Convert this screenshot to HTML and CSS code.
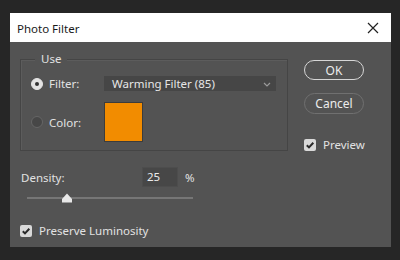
FILE: index.html
```html
<!DOCTYPE html>
<html>
<head>
<meta charset="utf-8">
<link rel="stylesheet" href="styles.css">
</head>
<body>
<div class="dialog">
  <div class="titlebar">
    <span class="title">Photo Filter</span>
    <svg class="close" width="12" height="12" viewBox="0 0 12 12"><path d="M1 1L11 11M11 1L1 11" stroke="#222" stroke-width="1.2" fill="none"/></svg>
  </div>
  <div class="content">
    <div class="left">
      <div class="group">
        <span class="legend">Use</span>
        <div class="row">
          <span class="radio checked"></span>
          <span class="rlabel">Filter:</span>
          <div class="select">
            <span>Warming Filter (85)</span>
            <svg class="chev" width="8" height="5" viewBox="0 0 8 5"><path d="M1 1L4 4L7 1" stroke="#9a9a9a" stroke-width="1.2" fill="none"/></svg>
          </div>
        </div>
        <div class="row row-color">
          <span class="radio"></span>
          <span class="rlabel">Color:</span>
          <div class="swatch"></div>
        </div>
      </div>
      <div class="density">
        <span class="dlabel">Density:</span>
        <div class="num">25</div>
        <span class="pct">%</span>
      </div>
      <div class="slider">
        <div class="track"></div>
        <svg class="thumb" width="12" height="10" viewBox="0 0 12 10"><path d="M6 0.5L11 6V9.5H1V6Z" fill="#e8e8e8"/></svg>
      </div>
      <div class="check-row lum">
        <span class="checkbox"><svg width="12" height="12" viewBox="0 0 12 12"><path d="M2.8 6.2L5 8.4L9.3 3.8" stroke="#2a2a2a" stroke-width="2" fill="none"/></svg></span>
        <span>Preserve Luminosity</span>
      </div>
    </div>
    <div class="right">
      <button class="btn ok">OK</button>
      <button class="btn cancel">Cancel</button>
      <div class="check-row preview">
        <span class="checkbox"><svg width="12" height="12" viewBox="0 0 12 12"><path d="M2.8 6.2L5 8.4L9.3 3.8" stroke="#2a2a2a" stroke-width="2" fill="none"/></svg></span>
        <span>Preview</span>
      </div>
    </div>
  </div>
</div>
</body>
</html>
```
FILE: styles.css
```css
html, body {
  margin: 0;
  padding: 0;
  background: #262626;
  width: 400px;
  height: 260px;
  overflow: hidden;
}
body {
  font-family: "Noto Sans", "Open Sans", sans-serif;
  font-size: 11px;
  color: #e2e2e2;
}
.dialog {
  margin: 13px 0 0 10px;
  width: 381px;
  height: 234px;
  background: #535353;
}
.titlebar {
  height: 29px;
  background: #ffffff;
  display: flex;
  align-items: center;
  justify-content: space-between;
  padding: 0 12px 0 7px;
}
.title {
  color: #1a1a1a;
  font-size: 11.5px;
  margin-top: 1px;
}
.close {
  display: block;
}
.content {
  display: flex;
  padding: 0 10px;
}
.left {
  width: 268px;
}
.group {
  position: relative;
  margin-top: 17px;
  height: 92px;
  border: 1px solid #454545;
  padding: 16px 10px 0 10px;
  box-sizing: border-box;
  box-shadow: inset 1px 1px 0 #5c5c5c;
}
.legend {
  position: absolute;
  top: -10px;
  left: 14px;
  padding: 0 6px;
  background: #535353;
  line-height: 18px;
  font-size: 11.5px;
}
.row {
  display: flex;
  align-items: center;
  height: 15px;
}
.row-color {
  height: 40px;
  margin-top: 11px;
}
.radio {
  width: 12px;
  height: 12px;
  border-radius: 50%;
  box-sizing: border-box;
  background: #474747;
  border: 1px solid #666;
  flex: none;
  position: relative;
}
.radio.checked {
  background: #e4e4e4;
  border-color: #e4e4e4;
}
.radio.checked::after {
  content: "";
  position: absolute;
  left: 3px;
  top: 3px;
  width: 4px;
  height: 4px;
  border-radius: 50%;
  background: #333;
}
.rlabel {
  margin-left: 6px;
  width: 55px;
  flex: none;
  font-size: 11.5px;
}
.select {
  width: 172px;
  height: 15px;
  background: #464646;
  display: flex;
  align-items: center;
  justify-content: space-between;
  padding: 0 5px 0 8px;
  box-sizing: border-box;
  color: #e6e6e6;
  font-size: 11.5px;
}
.chev {
  display: block;
  margin-top: 2px;
}
.swatch {
  width: 39px;
  height: 40px;
  box-sizing: border-box;
  background: #f28c00;
  border: 1px solid #3c3c3c;
}
.density {
  display: flex;
  align-items: center;
  margin-top: 16px;
  padding-left: 1px;
  height: 20px;
  font-size: 11.5px;
}
.dlabel {
  width: 121px;
}
.num {
  width: 36px;
  height: 20px;
  box-sizing: border-box;
  background: #474747;
  border: 1px solid #4d4d4d;
  padding-left: 4px;
  line-height: 18px;
  color: #ececec;
}
.pct {
  margin-left: 7px;
}
.slider {
  position: relative;
  margin: 5px 0 0 7px;
  width: 166px;
  height: 12px;
}
.track {
  position: absolute;
  left: 0;
  right: 0;
  top: 5px;
  height: 2px;
  background: #767676;
}
.thumb {
  position: absolute;
  left: 34px;
  top: 1px;
}
.check-row {
  display: flex;
  align-items: center;
  font-size: 11.5px;
}
.checkbox {
  width: 12px;
  height: 12px;
  background: #d9d9d9;
  border-radius: 2px;
  flex: none;
  display: block;
}
.checkbox svg {
  display: block;
}
.lum {
  margin-top: 19px;
  padding-left: 0;
  gap: 7px;
}
.right {
  display: flex;
  flex-direction: column;
  margin-left: 16px;
  padding-top: 18px;
}
.btn {
  width: 60px;
  height: 21px;
  border-radius: 11px;
  background: transparent;
  font-family: inherit;
  font-size: 12px;
  color: #ececec;
  padding: 0;
  box-sizing: border-box;
}
.ok {
  border: 1.5px solid #d6d6d6;
  height: 20px;
}
.cancel {
  margin-top: 13px;
  border: 1.5px solid #707070;
}
.preview {
  margin-top: 23px;
  gap: 7px;
}
```
